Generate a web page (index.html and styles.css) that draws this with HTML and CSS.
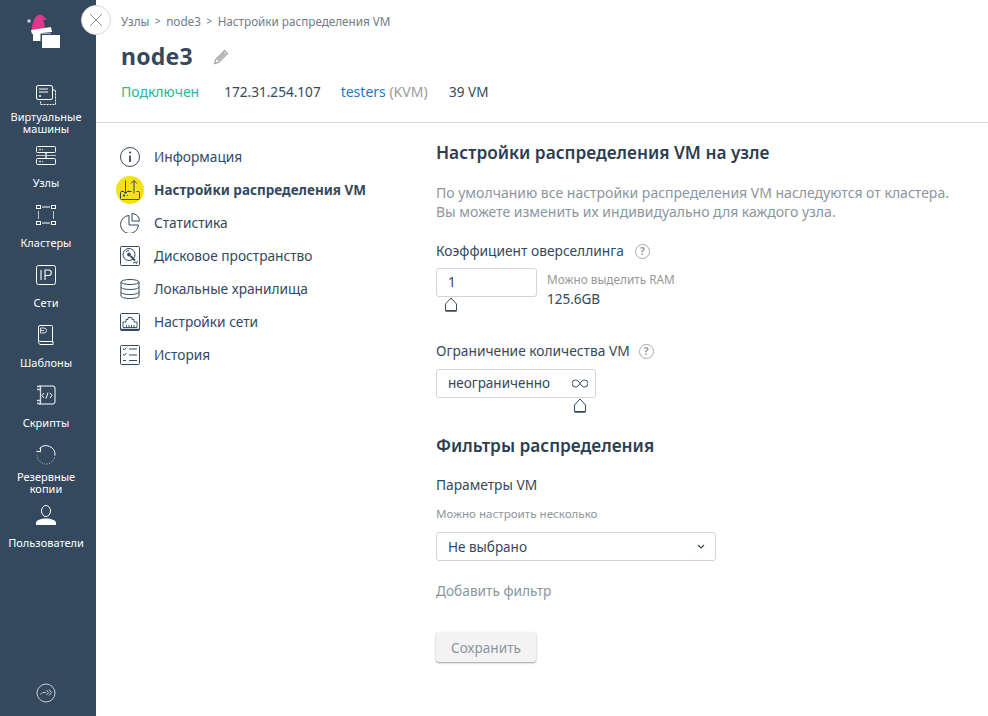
FILE: index.html
```html
<!DOCTYPE html>
<html lang="ru">
<head>
<meta charset="utf-8">
<title>node3</title>
<link rel="stylesheet" href="styles.css">
</head>
<body>
<div class="app">
  <aside class="sidebar">
    <div class="logo">
      <svg width="40" height="40" viewBox="0 0 40 40">
        <path d="M5.500 20 C6 11 9 2.500 14 2.500 C16.500 2.500 18 5.500 21 7.500 L17 8 C18 11 19 14 19 17.500 Z" fill="#e0368c"/>
        <circle cx="3" cy="9" r="1.800" fill="#cfd4d9"/>
        <path d="M5 18 L25 15 L26 20 L6 22 Z" fill="#fff"/>
        <rect x="7" y="21" width="18" height="8" fill="#fff"/>
        <rect x="15.250" y="22.250" width="19.500" height="14.500" fill="#fff" stroke="#34495e" stroke-width="1.500"/>
      </svg>
    </div>
    <nav class="side-nav">
      <a class="side-item">
        <svg width="20" height="20" viewBox="0 0 20 20" fill="none" stroke="#fff"><rect x="0.500" y="0.500" width="16" height="14" rx="1.500"/><path d="M3 4h9M3 7h9" /><path d="M3 11h2" stroke-width="1.500"/><path d="M17 5h2.500v14.500h-15V15.500" stroke-dasharray="2 1"/></svg>
        <span class="side-label">Виртуальные машины</span>
      </a>
      <a class="side-item">
        <svg width="20" height="20" viewBox="0 0 20 20" fill="none" stroke="#fff"><rect x="0.500" y="1.500" width="19" height="6" rx="1"/><rect x="0.500" y="13.500" width="19" height="6" rx="1"/><path d="M3 4.500h2M6 4.500h1M3 16.500h2M6 16.500h1" stroke="#bcc5cd" stroke-width="1.500"/><path d="M10 8v5" stroke-width="2" stroke="#bcc5cd"/><path d="M0 10.500h20" stroke="#bcc5cd"/></svg>
        <span class="side-label">Узлы</span>
      </a>
      <a class="side-item">
        <svg width="20" height="20" viewBox="0 0 20 20" fill="none" stroke="#fff"><rect x="0.500" y="0.500" width="4" height="3"/><rect x="15.500" y="0.500" width="4" height="3"/><rect x="0.500" y="16.500" width="4" height="3"/><rect x="15.500" y="16.500" width="4" height="3"/><path d="M6 2h8M6 18h8"/><path d="M2.500 6v8M17.500 6v8" stroke="#bcc5cd"/></svg>
        <span class="side-label">Кластеры</span>
      </a>
      <a class="side-item">
        <svg width="20" height="20" viewBox="0 0 20 20" fill="none" stroke="#fff"><rect x="0.500" y="0.500" width="19" height="19" rx="2"/><path d="M5 5v10M9 15V5h3.500a2.700 2.700 0 0 1 0 5.500H9" stroke-width="1.100"/></svg>
        <span class="side-label">Сети</span>
      </a>
      <a class="side-item">
        <svg width="20" height="20" viewBox="0 0 20 20" fill="none" stroke="#fff"><path d="M2.500 16V2a1.500 1.500 0 0 1 1.500-1.500h11.500a1 1 0 0 1 1 1v16"/><path d="M2.500 16.500a2.500 2.500 0 0 0 2.500 3h12v-3H5a2.500 2.500 0 0 0-2.500 0"/><path d="M4.500 3h3.500a2 2 0 0 1 0 5H4.500V3zM5 5.500h3" stroke="#d5dade"/></svg>
        <span class="side-label">Шаблоны</span>
      </a>
      <a class="side-item">
        <svg width="20" height="20" viewBox="0 0 20 20" fill="none" stroke="#fff"><path d="M3 1h14a2 2 0 0 1 2 2v14a2 2 0 0 1-2 2H3"/><path d="M1 1.500h3.500v17H1M1 4.500h3.500M1 15.500h3.500" stroke="#d5dade" stroke-width="1.300"/><path d="M8 8l-2 2.500 2 2.500M14 8l2 2.500-2 2.500M12 7.500l-2 6"/></svg>
        <span class="side-label">Скрипты</span>
      </a>
      <a class="side-item">
        <svg width="20" height="20" viewBox="0 0 20 20" fill="none" stroke="#fff"><path d="M3.500 3.500A9 9 0 0 1 19 10" /><path d="M19 10a9 9 0 0 1-18 0" stroke-dasharray="1 1.500" stroke="#cfd5da"/><path d="M0.500 6.500H4.500V2.500" transform="rotate(8 3 5)"/></svg>
        <span class="side-label">Резервные копии</span>
      </a>
      <a class="side-item">
        <svg width="20" height="20" viewBox="0 0 20 20"><ellipse cx="10" cy="6" rx="4.500" ry="5.500" fill="none" stroke="#fff"/><path d="M0 20v-2c0-3 5-4.500 10-4.500s10 1.500 10 4.500v2z" fill="#fff"/></svg>
        <span class="side-label">Пользователи</span>
      </a>
    </nav>
    <div class="side-foot">
      <svg width="20" height="20" viewBox="0 0 20 20" fill="none" stroke="#c8ced4"><circle cx="10" cy="10" r="9"/><path d="M4.500 11.500c1-2 2.500-2.200 5.500-2"/><path d="M10.500 7l2 2.500-2 2.500M13 6.500l2.500 3-2.500 3"/></svg>
    </div>
  </aside>

  <button class="close-btn" aria-label="Закрыть">
    <svg width="14" height="14" viewBox="0 0 14 14" fill="none" stroke="#8a9299"><path d="M1 1l12 12M13 1L1 13"/></svg>
  </button>

  <main class="main">
    <header class="page-head">
      <div class="crumbs"><span>Узлы</span><span class="sep">&gt;</span><span>node3</span><span class="sep">&gt;</span><span>Настройки распределения VM</span></div>
      <div class="title-row">
        <h1 class="title">node3</h1>
        <svg class="pencil" width="16" height="16" viewBox="0 0 16 16" fill="#b5b5b5"><path d="M11.500 1.500l3 3L5.500 13.500l-3.800 1 .8-3.800z" fill="none" stroke="#a8a8a8" stroke-width="1.300"/><path d="M3.500 10.500l2 2L13 5l-2-2z"/></svg>
      </div>
      <div class="meta">
        <span class="status">Подключен</span>
        <span class="ip">172.31.254.107</span>
        <span><span class="link">testers</span> <span class="muted">(KVM)</span></span>
        <span class="count">39 VM</span>
      </div>
    </header>

    <div class="content">
      <ul class="menu">
        <li class="menu-item">
          <span class="menu-icon"><svg width="20" height="20" viewBox="0 0 20 20" fill="none" stroke="#34495e"><circle cx="10" cy="10" r="9.500"/><path d="M10 8.500V15" stroke-width="1.800"/><circle cx="10" cy="5.500" r="1.100" fill="#34495e" stroke="none"/></svg></span>
          Информация
        </li>
        <li class="menu-item active">
          <span class="menu-icon"><span class="halo"></span><svg class="over" width="20" height="20" viewBox="0 0 20 20" fill="none" stroke="#34495e"><path d="M3.500 11.500H1.500a1 1 0 0 0-1 1v6a1 1 0 0 0 1 1h17a1 1 0 0 0 1-1v-6a1 1 0 0 0-1-1h-2M7.500 11.500h4"/><path d="M3 15.500h2" stroke-width="2"/><path d="M7 15.500h1"/><path d="M5.500 0.500v13M2.500 10.500l3 3 3-3M14 13.500V0.500M11 3.500l3-3 3 3"/></svg></span>
          Настройки распределения VM
        </li>
        <li class="menu-item">
          <span class="menu-icon"><svg width="20" height="20" viewBox="0 0 20 20" fill="none" stroke="#34495e"><path d="M9 2.500A9 9 0 1 0 18.500 12H9z"/><path d="M12 .5a7.500 7.500 0 0 1 7.500 7.500H12z"/></svg></span>
          Статистика
        </li>
        <li class="menu-item">
          <span class="menu-icon"><svg width="20" height="20" viewBox="0 0 20 20" fill="none" stroke="#34495e"><rect x="0.500" y="0.500" width="19" height="19" rx="1"/><circle cx="9" cy="8.500" r="6"/><circle cx="9" cy="8.500" r="1.500" fill="#34495e"/><path d="M6 6a3.500 3.500 0 0 1 3-1.500" /><path d="M10.500 10l4.500 4.500" stroke-width="1.800"/><path d="M13 17l3-1M16 18l1.500-3"/></svg></span>
          Дисковое пространство
        </li>
        <li class="menu-item">
          <span class="menu-icon"><svg width="20" height="20" viewBox="0 0 20 20" fill="none" stroke="#34495e"><ellipse cx="10" cy="3" rx="9" ry="2.500"/><path d="M1 3v14c0 1.400 4 2.500 9 2.500s9-1.100 9-2.500V3M1 8c0 1.400 4 2.500 9 2.500S19 9.400 19 8M1 13c0 1.400 4 2.500 9 2.500s9-1.100 9-2.500"/></svg></span>
          Локальные хранилища
        </li>
        <li class="menu-item">
          <span class="menu-icon"><svg width="20" height="20" viewBox="0 0 20 20" fill="none" stroke="#34495e"><rect x="0.500" y="1.500" width="19" height="17" rx="1"/><path d="M3 15.500V10h3V7.500h2V5.500h4V7.500h2V10h3v5.500zM6.500 13v2.500M9 13v2.500M11.500 13v2.500M14 13v2.500" stroke-width="0.900"/><path d="M0.500 17.500h19" stroke-width="1.500"/></svg></span>
          Настройки сети
        </li>
        <li class="menu-item">
          <span class="menu-icon"><svg width="20" height="20" viewBox="0 0 20 20" fill="none" stroke="#34495e"><rect x="0.500" y="0.500" width="19" height="19" rx="1"/><path d="M3 3.500l1.200 1.500L6.500 2.500M3 9l1.200 1.500L6.500 8M9 4h8M9 10h8M3 15.500h3M9 15.500h8"/></svg></span>
          История
        </li>
      </ul>

      <section class="form">
        <h2 class="h2">Настройки распределения VM на узле</h2>
        <p class="hint">По умолчанию все настройки распределения VM наследуются от кластера.<br>Вы можете изменить их индивидуально для каждого узла.</p>

        <div class="label first-label">Коэффициент оверселлинга <span class="q">?</span></div>
        <div class="field-row">
          <div class="input small">1
            <svg class="handle handle-left" width="12" height="15" viewBox="0 0 12 15" fill="#fff" stroke="#34495e"><path d="M0.500 13.500V7L6 1l5.500 6v6.500z"/><path d="M0.500 14h11" stroke-width="1.500"/></svg>
          </div>
          <div class="ram">
            <div class="ram-label">Можно выделить RAM</div>
            <div class="ram-val">125.6GB</div>
          </div>
        </div>

        <div class="label second-label">Ограничение количества VM <span class="q">?</span></div>
        <div class="input medium">неограниченно
          <svg class="inf" width="16" height="9" viewBox="0 0 16 9" fill="none" stroke="#34495e"><path d="M8 4.500C6.500 2.500 5.500 1 3.500 1a3.500 3.500 0 0 0 0 7c2 0 3-1.500 4.500-3.500S10.500 1 12.500 1a3.500 3.500 0 0 1 0 7C10.500 8 9.500 6.500 8 4.500z"/></svg>
          <svg class="handle handle-right" width="12" height="15" viewBox="0 0 12 15" fill="#fff" stroke="#34495e"><path d="M0.500 13.500V7L6 1l5.500 6v6.500z"/><path d="M0.500 14h11" stroke-width="1.500"/></svg>
        </div>

        <h2 class="h2 filters">Фильтры распределения</h2>
        <div class="label params">Параметры VM</div>
        <div class="note">Можно настроить несколько</div>
        <div class="input wide">Не выбрано
          <svg width="8" height="6" viewBox="0 0 8 6" fill="none" stroke="#34495e" stroke-width="1.200"><path d="M1 1l3 3 3-3"/></svg>
        </div>
        <div class="add">Добавить фильтр</div>
        <button class="save">Сохранить</button>
      </section>
    </div>
  </main>
</div>
</body>
</html>
```
FILE: styles.css
```css
* { box-sizing: border-box; }
html, body { margin: 0; height: 100%; }
body { font-family: "Noto Sans", "Open Sans", sans-serif; font-size: 14px; color: #34495e; background: #fff; overflow: hidden; }
.app { display: flex; height: 716px; position: relative; }

.sidebar { width: 96px; flex: none; background: #34495e; display: flex; flex-direction: column; padding-right: 4px; align-items: center; color: #fff; }
.logo { height: 85px; padding: 12px 0 0 26px; width: 100%; display: flex; justify-content: flex-start; }
.side-nav { display: flex; flex-direction: column; width: 100%; }
.side-item { height: 60px; display: flex; flex-direction: column; align-items: center; }
.side-item svg { flex: none; display: block; }
.side-label { height: 30px; padding-top: 6px; display: flex; align-items: center; text-align: center; justify-content: center; font-size: 11px; line-height: 12px; }
.side-foot { margin-top: auto; padding-bottom: 13px; }
.side-foot svg { display: block; }

.close-btn { position: absolute; left: 81px; top: 5px; width: 30px; height: 30px; border-radius: 50%; background: #fff; border: 1px solid #d8d8d8; display: flex; align-items: center; justify-content: center; padding: 0; }

.main { flex: 1; min-width: 0; }
.page-head { height: 123px; border-bottom: 1px solid #d9d9d9; padding: 13px 0 0 25px; }
.crumbs { font-size: 11.7px; line-height: 16px; color: #6f7b87; display: flex; gap: 5.500px; }
.sep { font-size: 10px; }
.title-row { display: flex; align-items: center; margin-top: 9px; height: 36px; }
.title { margin: 0; font-size: 23px; font-weight: 700; line-height: 36px; letter-spacing: 0.2px; }
.pencil { margin: 1px 0 0 20px; }
.meta { display: flex; margin-top: 9px; font-size: 14px; line-height: 18px; gap: 20px; }
.status { color: #2ab795; margin-right: 5px; }
.ip { color: #34495e; font-size: 13.6px; }
.link { color: #1a7ac4; }
.muted { color: #9a9a9a; }
.count { font-size: 13.5px; margin-left: 1.500px; }

.content { display: flex; padding: 0 0 0 24px; }
.menu { list-style: none; margin: 17px 0 0; padding: 0; width: 316px; flex: none; }
.menu-item { height: 33px; display: flex; align-items: center; gap: 14px; color: #34495e; font-size: 13.7px; }
.menu-item.active { font-weight: 700; font-size: 13.5px; }
.menu-icon { width: 20px; height: 20px; display: block; position: relative; flex: none; }
.menu-icon svg { display: block; }
.halo { position: absolute; left: -4px; top: -4px; width: 28px; height: 28px; border-radius: 50%; background: #f5e01c; }
.over { position: relative; }

.form { flex: 1; padding-top: 19px; }
.h2 { margin: 0; font-size: 17.25px; line-height: 22px; font-weight: 600; color: #2c3e50; }
.hint { margin: 19px 0 0; color: #8c959e; font-size: 14px; line-height: 19px; }
.label { font-size: 13.75px; line-height: 18px; color: #34495e; display: flex; align-items: center; gap: 11px; }
.first-label { margin-top: 21px; }
.q { width: 15px; height: 15px; border: 1px solid #a8a8a8; border-radius: 50%; font-size: 10px; line-height: 13px; font-weight: 700; text-align: center; color: #999; display: block; }
.field-row { display: flex; margin-top: 8px; gap: 10px; height: 59px; }
.input { position: relative; height: 29px; border: 1px solid #d5d5d5; border-radius: 3px; background: #fff; font-size: 13.5px; line-height: 27px; padding: 0 7px 0 11px; display: flex; align-items: center; justify-content: space-between; color: #34495e; }
.small { width: 101px; }
.medium { width: 160px; }
.wide { width: 280px; }
.handle { position: absolute; top: 28px; }
.handle-left { left: 8px; }
.handle-right { left: 137px; }
.ram-label { font-size: 11.8px; line-height: 16px; color: #979797; margin-top: 3px; }
.ram-val { font-size: 13.5px; line-height: 18px; margin-top: 3px; }
.second-label { margin-top: 15px; gap: 9px; }
.second-label + .input { margin-top: 9px; }
.filters { margin-top: 37px; }
.params { margin-top: 19px; }
.note { font-size: 11.6px; line-height: 16px; color: #8c959e; margin-top: 12px; }
.wide { margin-top: 10px; padding: 1px 10px 0 11px; }
.add { margin-top: 21px; color: #8c959e; font-size: 13.7px; line-height: 18px; }
.save { margin-top: 32px; width: 100px; height: 30px; display: block; background: #f3f3f3; border: 0; border-radius: 3px; box-shadow: 0 1px 2px rgba(0,0,0,.4); font: 13.6px "Noto Sans", sans-serif; color: #8c959e; padding: 0; }
```
